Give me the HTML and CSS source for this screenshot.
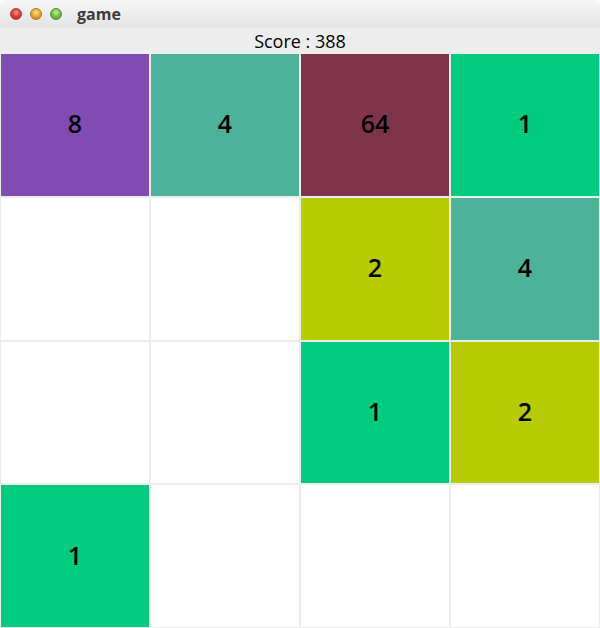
FILE: index.html
```html
<!DOCTYPE html>
<html>
<head>
<meta charset="utf-8">
<link rel="stylesheet" href="styles.css">
</head>
<body>
<div class="window">
  <div class="titlebar">
    <div class="buttons">
      <span class="btn red"></span>
      <span class="btn orange"></span>
      <span class="btn green"></span>
    </div>
    <div class="title">game</div>
  </div>
  <div class="score">Score : 388</div>
  <div class="grid">
    <div class="cell c8">8</div>
    <div class="cell c4">4</div>
    <div class="cell c64">64</div>
    <div class="cell c1">1</div>

    <div class="cell"></div>
    <div class="cell"></div>
    <div class="cell c2">2</div>
    <div class="cell c4">4</div>

    <div class="cell"></div>
    <div class="cell"></div>
    <div class="cell c1">1</div>
    <div class="cell c2">2</div>

    <div class="cell c1">1</div>
    <div class="cell"></div>
    <div class="cell"></div>
    <div class="cell"></div>
  </div>
</div>
</body>
</html>
```
FILE: styles.css
```css
html, body {
  margin: 0;
  padding: 0;
  background: #ffffff;
}
.window {
  width: 600px;
  height: 628px;
  display: flex;
  flex-direction: column;
  font-family: "Open Sans", "DejaVu Sans", sans-serif;
  background: #ededed;
  border-radius: 5px 5px 0 0;
  overflow: hidden;
}
.titlebar {
  height: 28px;
  flex: none;
  display: flex;
  align-items: center;
  background: linear-gradient(#f7f7f7, #e3e3e3);
}
.buttons {
  display: flex;
  gap: 8px;
  padding-left: 10px;
}
.btn {
  width: 12px;
  height: 12px;
  border-radius: 50%;
  box-sizing: border-box;
}
.red {
  background: radial-gradient(circle at 50% 35%, #ff9a9a 0, #e83c3c 45%, #b71c1c 100%);
  border: 1px solid #a94040;
}
.orange {
  background: radial-gradient(circle at 50% 35%, #ffe0a0 0, #f0a830 45%, #c07810 100%);
  border: 1px solid #a87a30;
}
.green {
  background: radial-gradient(circle at 50% 35%, #c8f0a0 0, #7cc04a 45%, #4a8a22 100%);
  border: 1px solid #5a8a40;
}
.title {
  margin-left: 15px;
  font-family: "Open Sans", "DejaVu Sans", sans-serif;
  font-weight: 700;
  font-size: 16px;
  color: #3c3c3c;
  line-height: 28px;
}
.score {
  height: 25px;
  flex: none;
  display: flex;
  align-items: center;
  justify-content: center;
  font-size: 18px;
  color: #000;
  background: #ededed;
}
.grid {
  flex: 1;
  display: grid;
  grid-template-columns: repeat(4, 1fr);
  grid-template-rows: repeat(4, 1fr);
  background: #ffffff;
}
.cell {
  border: 1px solid #ececec;
  background: #ffffff;
  display: flex;
  align-items: center;
  justify-content: center;
  padding-bottom: 3px;
  font-size: 25px;
  font-weight: 600;
  color: #000;
}
.c1 { background: #00cc7f; }
.c2 { background: #b6cc00; }
.c4 { background: #4cb39a; }
.c8 { background: #804cb4; }
.c64 { background: #80344c; }
```
